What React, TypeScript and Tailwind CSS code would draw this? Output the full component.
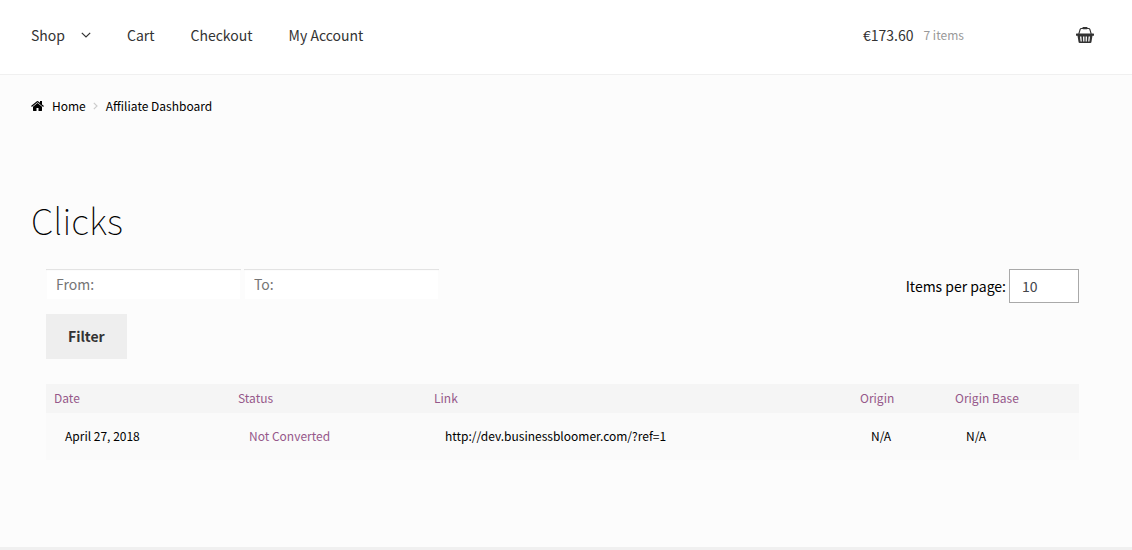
interface Click {
  date: string;
  status: string;
  link: string;
  origin: string;
  originBase: string;
}

const clicks: Click[] = [
  {
    date: 'April 27, 2018',
    status: 'Not Converted',
    link: 'http://dev.businessbloomer.com/?ref=1',
    origin: 'N/A',
    originBase: 'N/A',
  },
];

function HomeIcon() {
  return (
    <svg viewBox="0 0 1664 1792" className="h-3.5 w-[13px]" fill="currentColor" aria-hidden="true">
      <path d="M1408 992v480q0 26-19 45t-45 19H960v-384H704v384H320q-26 0-45-19t-19-45V992q0-1 .5-3t.5-3l575-474 575 474q1 2 1 6zm223-69l-62 74q-8 9-21 11h-3q-13 0-21-7L832 424 140 1001q-12 8-24 7-13-2-21-11l-62-74q-8-10-7-23.5t11-21.5l719-599q32-26 76-26t76 26l244 204V288q0-14 9-23t23-9h192q14 0 23 9t9 23v408l219 182q10 8 11 21.5t-7 23.5z" />
    </svg>
  );
}

function ArrowIcon() {
  return (
    <svg viewBox="0 0 10 6" className="h-1.5 w-2.5" fill="none" stroke="currentColor" strokeWidth="1.2" aria-hidden="true">
      <path d="M0.8 0.8 L5 5 L9.2 0.8" />
    </svg>
  );
}

function SeparatorIcon() {
  return (
    <svg viewBox="0 0 5 8" className="mr-2 ml-[7px] h-2 w-[5px] text-[#cccccc]" fill="none" stroke="currentColor" strokeWidth="1.2" aria-hidden="true">
      <path d="M0.8 0.8 L4 4 L0.8 7.2" />
    </svg>
  );
}

function BasketIcon() {
  return (
    <svg viewBox="0 0 18 16" className="h-4 w-[18px]" aria-hidden="true">
      <path d="M2.8 7 L4.1 2.5 Q4.4 1.5 5.4 1.5 H12.6 Q13.6 1.5 13.9 2.5 L15.2 7" fill="none" stroke="currentColor" strokeWidth="1.1" />
      <rect x="6.4" y="0" width="5.2" height="2.2" rx="0.8" fill="currentColor" />
      <rect x="0" y="6.4" width="18" height="2.4" rx="0.6" fill="currentColor" />
      <path
        fillRule="evenodd"
        fill="currentColor"
        d="M1.4 8 H16.6 L15.4 15.2 Q15.2 16 14.4 16 H3.6 Q2.8 16 2.6 15.2 Z M4 9.4 L4.6 14.4 H5.8 L5.4 9.4 Z M7 9.4 L7.2 14.4 H8.4 V9.4 Z M9.6 9.4 V14.4 H10.8 L11 9.4 Z M12.6 9.4 L12.2 14.4 H13.4 L14 9.4 Z"
      />
    </svg>
  );
}

function Header() {
  return (
    <header className="flex items-center justify-between border-b border-[#f0f0f0] bg-white pt-[23px] pr-[38px] pb-[27px] pl-[31px] text-sm leading-6 text-[#333333]">
      <nav className="flex items-center gap-9">
        <a href="#shop" className="flex items-center gap-4">
          Shop
          <ArrowIcon />
        </a>
        <a href="#cart">Cart</a>
        <a href="#checkout">Checkout</a>
        <a href="#account">My Account</a>
      </nav>
      <a href="#basket" className="flex w-[231px] items-center">
        <span>€173.60</span>
        <span className="ml-2.5 text-xs leading-6 text-[#999999]">7 items</span>
        <span className="ml-auto">
          <BasketIcon />
        </span>
      </a>
    </header>
  );
}

function Breadcrumb() {
  return (
    <nav aria-label="Breadcrumb" className="flex items-center pl-[31px] text-xs leading-5">
      <a href="#home" className="flex items-center gap-2">
        <HomeIcon />
        Home
      </a>
      <SeparatorIcon />
      <span>Affiliate Dashboard</span>
    </nav>
  );
}

function Filters() {
  return (
    <form className="flex items-start justify-between" onSubmit={(e) => e.preventDefault()}>
      <div>
        <div className="flex gap-[3px]">
          <input
            type="text"
            aria-label="From"
            placeholder="From:"
            className="h-[30px] w-[195px] bg-white px-2.5 text-sm shadow-[inset_0_1px_1px_rgba(0,0,0,0.125)] placeholder:text-[#757575]"
          />
          <input
            type="text"
            aria-label="To"
            placeholder="To:"
            className="h-[30px] w-[195px] bg-white px-2.5 text-sm shadow-[inset_0_1px_1px_rgba(0,0,0,0.125)] placeholder:text-[#757575]"
          />
        </div>
        <button type="submit" className="mt-[15px] h-[45px] bg-[#eeeeee] px-[22px] pb-0.5 text-sm font-bold text-[#333333]">
          Filter
        </button>
      </div>
      <label className="flex items-center gap-[3px] text-sm">
        Items per page:
        <input
          type="text"
          defaultValue="10"
          className="h-[34px] w-[70px] border border-[#a9a9a9] bg-white px-3 text-sm text-[#43454b]"
        />
      </label>
    </form>
  );
}

function ClicksTable() {
  return (
    <table className="mt-[25px] w-full table-fixed text-left text-xs">
      <colgroup>
        <col className="w-[184px]" />
        <col className="w-[196px]" />
        <col />
        <col className="w-[95px]" />
        <col className="w-[132px]" />
      </colgroup>
      <thead className="bg-[#f5f5f5] leading-[27px] text-[#96588a]">
        <tr>
          <th className="px-2 pb-0.5 font-normal">Date</th>
          <th className="px-2 pb-0.5 font-normal">Status</th>
          <th className="px-2 pb-0.5 font-normal">Link</th>
          <th className="px-2 pb-0.5 font-normal">Origin</th>
          <th className="px-2 pb-0.5 font-normal">Origin Base</th>
        </tr>
      </thead>
      <tbody className="bg-[#fafafa] leading-[45px]">
        {clicks.map((click) => (
          <tr key={click.link}>
            <td className="pb-0.5 pl-[19px]">{click.date}</td>
            <td className="pb-0.5 pl-[19px] text-[#96588a]">{click.status}</td>
            <td className="pb-0.5 pl-[19px]">{click.link}</td>
            <td className="pb-0.5 pl-[19px]">{click.origin}</td>
            <td className="pb-0.5 pl-[19px]">{click.originBase}</td>
          </tr>
        ))}
      </tbody>
    </table>
  );
}

export default function App() {
  return (
    <div className="flex min-h-screen flex-col bg-[#fcfcfc] font-['Noto_Sans_CJK_SC',sans-serif] text-black">
      <Header />
      <main className="flex-1 pt-[21px]">
        <Breadcrumb />
        <h1 className="mt-[77px] pl-[31px] text-4xl leading-[52px] font-thin">Clicks</h1>
        <section className="mt-6 pr-[53px] pl-[46px]">
          <Filters />
          <ClicksTable />
        </section>
      </main>
      <footer className="h-[3px] bg-[#f0f0f0]" />
    </div>
  );
}
